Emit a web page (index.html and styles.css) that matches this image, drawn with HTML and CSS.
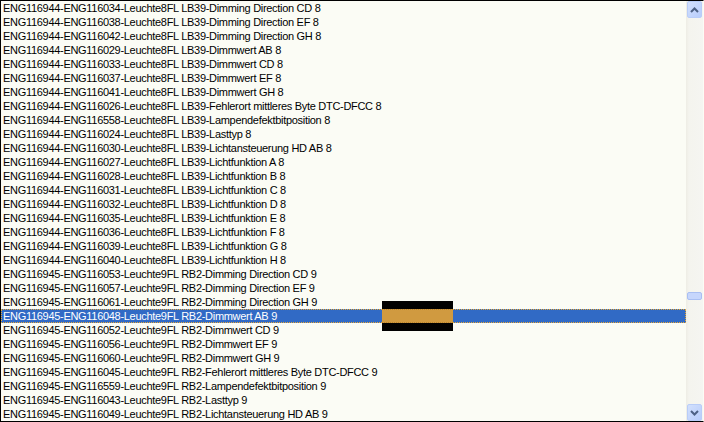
FILE: index.html
```html
<!DOCTYPE html>
<html lang="en">
<head>
    <meta charset="UTF-8">
    <title>Signal list</title>
    <link rel="stylesheet" href="styles.css">
</head>
<body>
    <div class="listbox">
        <div class="items">
            <div class="row">ENG116944-ENG116034-Leuchte8FL LB39-Dimming Direction CD 8</div>
            <div class="row">ENG116944-ENG116038-Leuchte8FL LB39-Dimming Direction EF 8</div>
            <div class="row">ENG116944-ENG116042-Leuchte8FL LB39-Dimming Direction GH 8</div>
            <div class="row">ENG116944-ENG116029-Leuchte8FL LB39-Dimmwert AB 8</div>
            <div class="row">ENG116944-ENG116033-Leuchte8FL LB39-Dimmwert CD 8</div>
            <div class="row">ENG116944-ENG116037-Leuchte8FL LB39-Dimmwert EF 8</div>
            <div class="row">ENG116944-ENG116041-Leuchte8FL LB39-Dimmwert GH 8</div>
            <div class="row">ENG116944-ENG116026-Leuchte8FL LB39-Fehlerort mittleres Byte DTC-DFCC 8</div>
            <div class="row">ENG116944-ENG116558-Leuchte8FL LB39-Lampendefektbitposition 8</div>
            <div class="row">ENG116944-ENG116024-Leuchte8FL LB39-Lasttyp 8</div>
            <div class="row">ENG116944-ENG116030-Leuchte8FL LB39-Lichtansteuerung HD AB 8</div>
            <div class="row">ENG116944-ENG116027-Leuchte8FL LB39-Lichtfunktion A 8</div>
            <div class="row">ENG116944-ENG116028-Leuchte8FL LB39-Lichtfunktion B 8</div>
            <div class="row">ENG116944-ENG116031-Leuchte8FL LB39-Lichtfunktion C 8</div>
            <div class="row">ENG116944-ENG116032-Leuchte8FL LB39-Lichtfunktion D 8</div>
            <div class="row">ENG116944-ENG116035-Leuchte8FL LB39-Lichtfunktion E 8</div>
            <div class="row">ENG116944-ENG116036-Leuchte8FL LB39-Lichtfunktion F 8</div>
            <div class="row">ENG116944-ENG116039-Leuchte8FL LB39-Lichtfunktion G 8</div>
            <div class="row">ENG116944-ENG116040-Leuchte8FL LB39-Lichtfunktion H 8</div>
            <div class="row">ENG116945-ENG116053-Leuchte9FL RB2-Dimming Direction CD 9</div>
            <div class="row">ENG116945-ENG116057-Leuchte9FL RB2-Dimming Direction EF 9</div>
            <div class="row">ENG116945-ENG116061-Leuchte9FL RB2-Dimming Direction GH 9</div>
            <div class="row selected">ENG116945-ENG116048-Leuchte9FL RB2-Dimmwert AB 9</div>
            <div class="row">ENG116945-ENG116052-Leuchte9FL RB2-Dimmwert CD 9</div>
            <div class="row">ENG116945-ENG116056-Leuchte9FL RB2-Dimmwert EF 9</div>
            <div class="row">ENG116945-ENG116060-Leuchte9FL RB2-Dimmwert GH 9</div>
            <div class="row">ENG116945-ENG116045-Leuchte9FL RB2-Fehlerort mittleres Byte DTC-DFCC 9</div>
            <div class="row">ENG116945-ENG116559-Leuchte9FL RB2-Lampendefektbitposition 9</div>
            <div class="row">ENG116945-ENG116043-Leuchte9FL RB2-Lasttyp 9</div>
            <div class="row">ENG116945-ENG116049-Leuchte9FL RB2-Lichtansteuerung HD AB 9</div>

            <!-- drag marker over the selected row -->
            <div class="marker"><div class="marker-band"></div></div>
        </div>

        <div class="scrollbar">
            <div class="sb-button">
                <svg width="9" height="6" viewBox="0 0 9 6"><path d="M1 5 L4.5 1.5 L8 5" fill="none" stroke="#4d6185" stroke-width="2"/></svg>
            </div>
            <div class="sb-track">
                <div class="sb-thumb"></div>
            </div>
            <div class="sb-button">
                <svg width="9" height="6" viewBox="0 0 9 6"><path d="M1 1 L4.5 4.5 L8 1" fill="none" stroke="#4d6185" stroke-width="2"/></svg>
            </div>
        </div>
    </div>
</body>
</html>
```

FILE: styles.css
```css
body {
    margin: 0;
    background: #fbfcf5;
    font-family: "Liberation Sans", Arial, sans-serif;
}

.listbox {
    display: flex;
    width: 704px;
    height: 422px;
    box-sizing: border-box;
    border: 1px solid #000;
    border-right-color: #fbfcf5;
    background: #fbfcf5;
}

.items {
    position: relative;
    flex: 1;
    overflow: hidden;
}

.row {
    height: 14px;
    line-height: 14px;
    padding-left: 2px;
    font-size: 11px;
    letter-spacing: -0.3px;
    color: #000;
    white-space: nowrap;
    box-sizing: border-box;
}

.row.selected {
    background: #316ac5;
    color: #fff;
    border: 1px dotted #e8a838;
    line-height: 12px;
    padding-left: 1px;
}

.marker {
    position: absolute;
    left: 381px;
    top: 300px;
    width: 71px;
    height: 30px;
    background: #000;
    display: flex;
    flex-direction: column;
    justify-content: center;
}

.marker-band {
    height: 14px;
    box-sizing: border-box;
    background: #d09a40;
    border-top: 1px dotted #b8822c;
    border-bottom: 1px dotted #b8822c;
}

.scrollbar {
    width: 17px;
    display: flex;
    flex-direction: column;
    background: linear-gradient(to right, #eeede5 0, #f4f4ee 3px, #f5f5f1 100%);
}

.sb-button {
    height: 17px;
    margin: 0 1px 0 1px;
    box-sizing: border-box;
    border: 1px solid #b9cdf8;
    border-radius: 2px;
    background: linear-gradient(to bottom right, #d2e0fd, #b8cdfb);
    display: flex;
    align-items: center;
    justify-content: center;
}

.sb-track {
    flex: 1;
    padding-top: 274px;
}

.sb-thumb {
    height: 8px;
    margin: 0 1px;
    box-sizing: border-box;
    border: 1px solid #a9bff2;
    border-radius: 2px;
    background: #c6d6fc;
}
```
